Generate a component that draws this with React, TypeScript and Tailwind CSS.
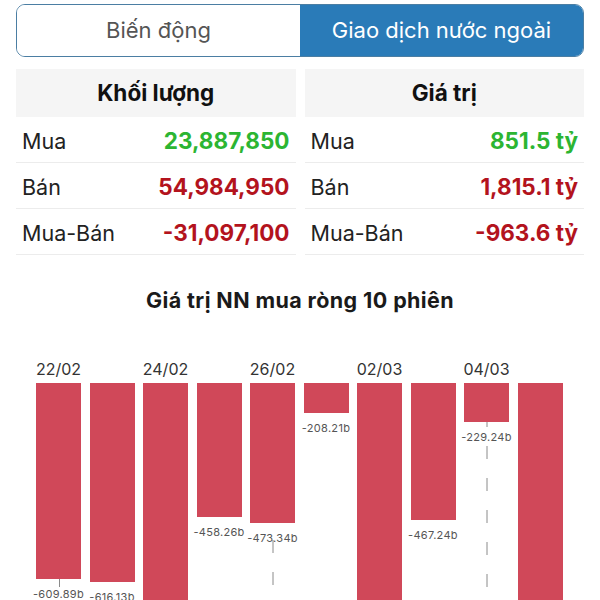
const volume = [
  { label: 'Mua', value: '23,887,850', color: 'text-[#2cb532]' },
  { label: 'Bán', value: '54,984,950', color: 'text-[#b3131d]' },
  { label: 'Mua-Bán', value: '-31,097,100', color: 'text-[#b3131d]' },
];

const amount = [
  { label: 'Mua', value: '851.5 tỷ', color: 'text-[#2cb532]' },
  { label: 'Bán', value: '1,815.1 tỷ', color: 'text-[#b3131d]' },
  { label: 'Mua-Bán', value: '-963.6 tỷ', color: 'text-[#b3131d]' },
];

type Bar = { date?: string; h: number; label?: string; tick?: boolean; dash?: number };

const bars: Bar[] = [
  { date: '22/02', h: 196, label: '-609.89b', tick: true },
  { h: 199, label: '-616.13b' },
  { date: '24/02', h: 260 },
  { h: 134, label: '-458.26b' },
  { date: '26/02', h: 140, label: '-473.34b', dash: 15 },
  { h: 30, label: '-208.21b' },
  { date: '02/03', h: 260 },
  { h: 137, label: '-467.24b' },
  { date: '04/03', h: 39, label: '-229.24b', dash: 8 },
  { h: 260 },
];

function StatTable({ title, rows }: { title: string; rows: typeof volume }) {
  return (
    <div className="flex flex-col">
      <div className="h-[48px] bg-[#f5f5f5] flex items-center justify-center text-[22.5px] font-bold text-[#111]">
        {title}
      </div>
      {rows.map((r) => (
        <div key={r.label} className="h-[46px] pt-[3px] border-b border-[#ececec] flex items-center justify-between px-[6px]">
          <span className="text-[21.5px] text-[#222]">{r.label}</span>
          <span className={`text-[22.5px] font-bold ${r.color}`}>{r.value}</span>
        </div>
      ))}
    </div>
  );
}

export default function App() {
  return (
    <div className="w-[600px] h-[600px] overflow-hidden bg-white font-['Inter','Liberation_Sans',sans-serif]">
      <div className="pt-[4px] px-[16px]">
        {/* tabs */}
        <div className="h-[53px] flex rounded-[9px] border border-[#4b7ea3] overflow-hidden">
          <div className="w-1/2 flex items-center justify-center text-[22px] text-[#555] bg-white">Biến động</div>
          <div className="w-1/2 flex items-center justify-center text-[22px] text-white bg-[#2a7bb8]">Giao dịch nước ngoài</div>
        </div>

        <div className="mt-[12px] grid grid-cols-2 gap-[9px]">
          <StatTable title="Khối lượng" rows={volume} />
          <StatTable title="Giá trị" rows={amount} />
        </div>

        <div className="mt-[33px] h-[24px] leading-[24px] text-center text-[21.5px] tracking-[0.4px] font-bold text-[#1a1a1a]">
          Giá trị NN mua ròng 10 phiên
        </div>
      </div>

      {/* chart */}
      <div className="mt-[43px] flex gap-[8.5px] pl-[36px]">
        {bars.map((b, i) => (
          <div key={i} className="relative w-[45px] shrink-0">
            <div className="h-[28px] flex items-center justify-center text-[16px] text-[#333] whitespace-nowrap">
              {b.date ?? ''}
            </div>
            {b.dash !== undefined && (
              <svg
                className="absolute left-1/2 -translate-x-1/2"
                style={{ top: 28 + b.h }}
                width="2"
                height="300"
              >
                <line x1="1" y1="0" x2="1" y2="300" stroke="#8a8a8a" strokeWidth="1" strokeDasharray="13 19" strokeDashoffset={b.dash} />
              </svg>
            )}
            {b.tick && (
              <div className="absolute left-1/2 w-px h-[8px] bg-[#8a8a8a]" style={{ top: 28 + b.h }} />
            )}
            <div className="bg-[#d04859]" style={{ height: b.h }} />
            {b.label && (
              <div
                className="absolute left-1/2 -translate-x-1/2 whitespace-nowrap text-[11px] leading-[15px] tracking-[0.3px] text-[#555]"
                style={{ top: 28 + b.h + 8 }}
              >
                {b.label}
              </div>
            )}
          </div>
        ))}
      </div>
    </div>
  );
}
